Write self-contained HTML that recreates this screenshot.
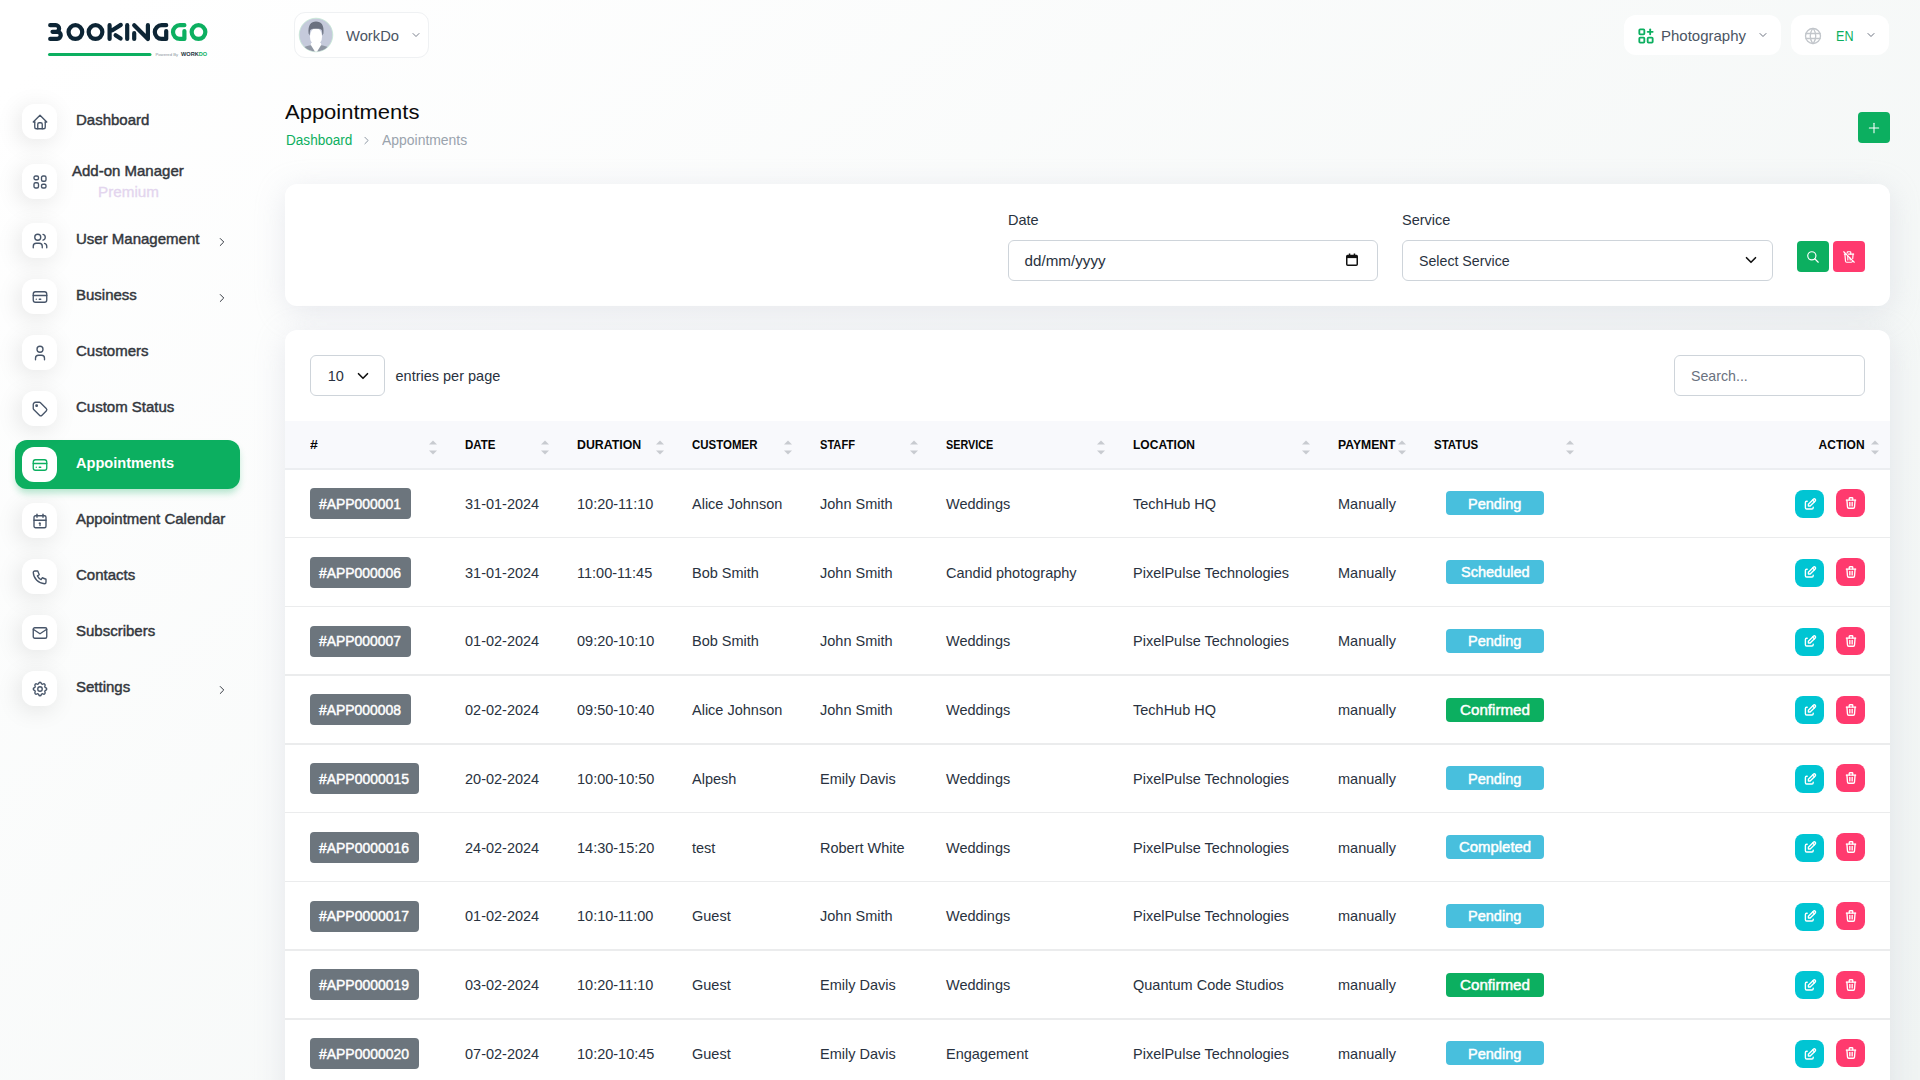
<!DOCTYPE html>
<html><head><meta charset="utf-8"><title>Appointments</title>
<style>
html,body{margin:0;padding:0;width:1920px;height:1080px;overflow:hidden;background:#fff;}
body{position:relative;font-family:"Liberation Sans",sans-serif;}
.a{position:absolute;}
.t{position:absolute;line-height:1;white-space:nowrap;}
svg.a{overflow:visible;}
</style></head><body>
<div class="a" style="left:0;top:0;width:1920px;height:1080px;background:linear-gradient(141.55deg, rgba(240,244,243,0) 3.46%, #f0f4f3 99.86%);"></div>
<svg class="a" style="left:40px;top:15px" width="180" height="50" viewBox="40 15 180 50">
<g fill="none" stroke="#0d2535" stroke-width="4.2" stroke-linecap="round" stroke-linejoin="round">
<path d="M50.2 25.2H55.8a3.3 3.3 0 0 1 0 6.6H52.5M52.5 31.8H57.2a3.55 3.55 0 0 1 0 7.1H50.2"/>
<circle cx="75.4" cy="32.05" r="6.85"/>
<circle cx="95.5" cy="32.05" r="6.85"/>
<path d="M109.6 25.2V38.9M112.3 30.2L120.8 24.9M115.6 35.2L120.6 38.6"/>
<path d="M127.2 25.2V38.9"/>
<path d="M134.2 33.2V38.9M134.2 25.2L147.9 38.9V25.2"/>
<path d="M166.2 25.2H161.65A6.85 6.85 0 0 0 161.65 38.9H166.2V31"/>
</g>
<g fill="none" stroke="#0caf60" stroke-width="4.2" stroke-linecap="round" stroke-linejoin="round">
<path d="M184.4 25.2H179.85A6.85 6.85 0 0 0 179.85 38.9H184.4V31"/>
<circle cx="198.5" cy="32.05" r="6.85"/>
<path d="M49.5 54.5H150" stroke-width="3"/>
</g>
<text x="155.5" y="55.6" font-family="Liberation Sans" font-size="4.2" fill="#8a949c">Powered By</text>
<text x="181" y="56" font-family="Liberation Sans" font-size="5.6" font-weight="700" fill="#1d3340">WORK<tspan fill="#0caf60">DO</tspan></text>
</svg>
<div class="a" style="left:15px;top:440px;width:225px;height:49px;background:#0caf60;border-radius:12px;box-shadow:0 5px 7px -1px rgba(12,175,96,0.3);"></div>
<div class="a" style="left:22px;top:104px;width:35px;height:35px;background:#fff;border-radius:12px;box-shadow:-3px 4px 23px rgba(0,0,0,0.1);"></div>
<svg class="a" style="left:31.1px;top:112.7px;" width="18" height="18" viewBox="0 0 24 24" fill="none" stroke="#475569" stroke-width="1.8" stroke-linecap="round" stroke-linejoin="round"><path d="M5 12l-2 0l9 -9l9 9l-2 0"/><path d="M5 12v7a2 2 0 0 0 2 2h10a2 2 0 0 0 2 -2v-7"/><path d="M9 21v-6a2 2 0 0 1 2 -2h2a2 2 0 0 1 2 2v6"/></svg>
<div class="t" style="left:76px;top:112.30px;font-size:15px;font-weight:400;color:#33373d;-webkit-text-stroke:0.45px #33373d;">Dashboard</div>
<div class="a" style="left:22px;top:164px;width:35px;height:35px;background:#fff;border-radius:12px;box-shadow:-3px 4px 23px rgba(0,0,0,0.1);"></div>
<svg class="a" style="left:31.1px;top:172.7px;" width="18" height="18" viewBox="0 0 24 24" fill="none" stroke="#475569" stroke-width="1.8" stroke-linecap="round" stroke-linejoin="round"><path d="M4 6a2 2 0 0 1 2 -2h2a2 2 0 0 1 2 2v1a2 2 0 0 1 -2 2h-2a2 2 0 0 1 -2 -2z"/><path d="M4 15a2 2 0 0 1 2 -2h2a2 2 0 0 1 2 2v3a2 2 0 0 1 -2 2h-2a2 2 0 0 1 -2 -2z"/><path d="M14 6a2 2 0 0 1 2 -2h2a2 2 0 0 1 2 2v3a2 2 0 0 1 -2 2h-2a2 2 0 0 1 -2 -2z"/><path d="M14 17a2 2 0 0 1 2 -2h2a2 2 0 0 1 2 2v1a2 2 0 0 1 -2 2h-2a2 2 0 0 1 -2 -2z"/></svg>
<div class="t" style="left:72px;top:163.30px;font-size:15px;font-weight:400;color:#33373d;-webkit-text-stroke:0.45px #33373d;">Add-on Manager</div>
<div class="a" style="left:22px;top:223px;width:35px;height:35px;background:#fff;border-radius:12px;box-shadow:-3px 4px 23px rgba(0,0,0,0.1);"></div>
<svg class="a" style="left:31.1px;top:231.7px;" width="18" height="18" viewBox="0 0 24 24" fill="none" stroke="#475569" stroke-width="1.8" stroke-linecap="round" stroke-linejoin="round"><path d="M5 7a4 4 0 1 0 8 0a4 4 0 1 0 -8 0"/><path d="M3 21v-2a4 4 0 0 1 4 -4h4a4 4 0 0 1 4 4v2"/><path d="M16 3.13a4 4 0 0 1 0 7.75"/><path d="M21 21v-2a4 4 0 0 0 -3 -3.85"/></svg>
<div class="t" style="left:76px;top:230.95px;font-size:15px;font-weight:400;color:#33373d;-webkit-text-stroke:0.45px #33373d;">User Management</div>
<svg class="a" style="left:214.5px;top:234.9px;" width="14" height="14" viewBox="0 0 24 24" fill="none" stroke="#333840" stroke-width="1.7" stroke-linecap="round" stroke-linejoin="round"><path d="M9 6l6 6l-6 6"/></svg>
<div class="a" style="left:22px;top:279px;width:35px;height:35px;background:#fff;border-radius:12px;box-shadow:-3px 4px 23px rgba(0,0,0,0.1);"></div>
<svg class="a" style="left:31.1px;top:287.7px;" width="18" height="18" viewBox="0 0 24 24" fill="none" stroke="#475569" stroke-width="1.8" stroke-linecap="round" stroke-linejoin="round"><path d="M3 8a3 3 0 0 1 3 -3h12a3 3 0 0 1 3 3v8a3 3 0 0 1 -3 3h-12a3 3 0 0 1 -3 -3z"/><path d="M3 10l18 0"/><path d="M7 15l.01 0"/><path d="M11 15l2 0"/></svg>
<div class="t" style="left:76px;top:287.20px;font-size:15px;font-weight:400;color:#33373d;-webkit-text-stroke:0.45px #33373d;">Business</div>
<svg class="a" style="left:214.5px;top:291px;" width="14" height="14" viewBox="0 0 24 24" fill="none" stroke="#333840" stroke-width="1.7" stroke-linecap="round" stroke-linejoin="round"><path d="M9 6l6 6l-6 6"/></svg>
<div class="a" style="left:22px;top:335px;width:35px;height:35px;background:#fff;border-radius:12px;box-shadow:-3px 4px 23px rgba(0,0,0,0.1);"></div>
<svg class="a" style="left:31.1px;top:343.7px;" width="18" height="18" viewBox="0 0 24 24" fill="none" stroke="#475569" stroke-width="1.8" stroke-linecap="round" stroke-linejoin="round"><path d="M8 7a4 4 0 1 0 8 0a4 4 0 0 0 -8 0"/><path d="M6 21v-2a4 4 0 0 1 4 -4h4a4 4 0 0 1 4 4v2"/></svg>
<div class="t" style="left:76px;top:343.00px;font-size:15px;font-weight:400;color:#33373d;-webkit-text-stroke:0.45px #33373d;">Customers</div>
<div class="a" style="left:22px;top:391px;width:35px;height:35px;background:#fff;border-radius:12px;box-shadow:-3px 4px 23px rgba(0,0,0,0.1);"></div>
<svg class="a" style="left:31.1px;top:399.7px;" width="18" height="18" viewBox="0 0 24 24" fill="none" stroke="#475569" stroke-width="1.8" stroke-linecap="round" stroke-linejoin="round"><path d="M6.5 7.5a1 1 0 1 0 2 0a1 1 0 1 0 -2 0"/><path d="M3 6v5.172a2 2 0 0 0 .586 1.414l7.71 7.71a2.41 2.41 0 0 0 3.408 0l5.592 -5.592a2.41 2.41 0 0 0 0 -3.408l-7.71 -7.71a2 2 0 0 0 -1.414 -.586h-5.172a3 3 0 0 0 -3 3z"/></svg>
<div class="t" style="left:76px;top:399.20px;font-size:15px;font-weight:400;color:#33373d;-webkit-text-stroke:0.45px #33373d;">Custom Status</div>
<div class="a" style="left:22px;top:447px;width:35px;height:35px;background:#fff;border-radius:12px;"></div>
<svg class="a" style="left:31.1px;top:455.7px;" width="18" height="18" viewBox="0 0 24 24" fill="none" stroke="#0caf60" stroke-width="1.8" stroke-linecap="round" stroke-linejoin="round"><path d="M3 8a3 3 0 0 1 3 -3h12a3 3 0 0 1 3 3v8a3 3 0 0 1 -3 3h-12a3 3 0 0 1 -3 -3z"/><path d="M3 10l18 0"/><path d="M7 15l.01 0"/><path d="M11 15l2 0"/></svg>
<div class="t" style="left:76px;top:456.24px;font-size:14.6px;font-weight:700;color:#fff;">Appointments</div>
<div class="a" style="left:22px;top:503px;width:35px;height:35px;background:#fff;border-radius:12px;box-shadow:-3px 4px 23px rgba(0,0,0,0.1);"></div>
<svg class="a" style="left:31.1px;top:511.7px;" width="18" height="18" viewBox="0 0 24 24" fill="none" stroke="#475569" stroke-width="1.8" stroke-linecap="round" stroke-linejoin="round"><path d="M4 7a2 2 0 0 1 2 -2h12a2 2 0 0 1 2 2v12a2 2 0 0 1 -2 2h-12a2 2 0 0 1 -2 -2v-12z"/><path d="M16 3v4"/><path d="M8 3v4"/><path d="M4 11h16"/><path d="M11 15h1"/><path d="M12 15v3"/></svg>
<div class="t" style="left:76px;top:511.20px;font-size:15px;font-weight:400;color:#33373d;-webkit-text-stroke:0.45px #33373d;">Appointment Calendar</div>
<div class="a" style="left:22px;top:559px;width:35px;height:35px;background:#fff;border-radius:12px;box-shadow:-3px 4px 23px rgba(0,0,0,0.1);"></div>
<svg class="a" style="left:31.1px;top:567.7px;" width="18" height="18" viewBox="0 0 24 24" fill="none" stroke="#475569" stroke-width="1.8" stroke-linecap="round" stroke-linejoin="round"><path d="M5 4h4l2 5l-2.5 1.5a11 11 0 0 0 5 5l1.5 -2.5l5 2v4a2 2 0 0 1 -2 2a16 16 0 0 1 -15 -15a2 2 0 0 1 2 -2"/></svg>
<div class="t" style="left:76px;top:567.00px;font-size:15px;font-weight:400;color:#33373d;-webkit-text-stroke:0.45px #33373d;">Contacts</div>
<div class="a" style="left:22px;top:615px;width:35px;height:35px;background:#fff;border-radius:12px;box-shadow:-3px 4px 23px rgba(0,0,0,0.1);"></div>
<svg class="a" style="left:31.1px;top:623.7px;" width="18" height="18" viewBox="0 0 24 24" fill="none" stroke="#475569" stroke-width="1.8" stroke-linecap="round" stroke-linejoin="round"><path d="M3 7a2 2 0 0 1 2 -2h14a2 2 0 0 1 2 2v10a2 2 0 0 1 -2 2h-14a2 2 0 0 1 -2 -2v-10z"/><path d="M3 7l9 6l9 -6"/></svg>
<div class="t" style="left:76px;top:623.00px;font-size:15px;font-weight:400;color:#33373d;-webkit-text-stroke:0.45px #33373d;">Subscribers</div>
<div class="a" style="left:22px;top:671px;width:35px;height:35px;background:#fff;border-radius:12px;box-shadow:-3px 4px 23px rgba(0,0,0,0.1);"></div>
<svg class="a" style="left:31.1px;top:679.7px;" width="18" height="18" viewBox="0 0 24 24" fill="none" stroke="#475569" stroke-width="1.8" stroke-linecap="round" stroke-linejoin="round"><path d="M10.325 4.317c.426 -1.756 2.924 -1.756 3.35 0a1.724 1.724 0 0 0 2.573 1.066c1.543 -.94 3.31 .826 2.37 2.37a1.724 1.724 0 0 0 1.065 2.572c1.756 .426 1.756 2.924 0 3.35a1.724 1.724 0 0 0 -1.066 2.573c.94 1.543 -.826 3.31 -2.37 2.37a1.724 1.724 0 0 0 -2.572 1.065c-.426 1.756 -2.924 1.756 -3.35 0a1.724 1.724 0 0 0 -2.573 -1.066c-1.543 .94 -3.31 -.826 -2.37 -2.37a1.724 1.724 0 0 0 -1.065 -2.572c-1.756 -.426 -1.756 -2.924 0 -3.35a1.724 1.724 0 0 0 1.066 -2.573c-.94 -1.543 .826 -3.31 2.37 -2.37c1 .608 2.296 .07 2.572 -1.065z"/><path d="M9 12a3 3 0 1 0 6 0a3 3 0 0 0 -6 0"/></svg>
<div class="t" style="left:76px;top:678.70px;font-size:15px;font-weight:400;color:#33373d;-webkit-text-stroke:0.45px #33373d;">Settings</div>
<svg class="a" style="left:214.5px;top:682.5px;" width="14" height="14" viewBox="0 0 24 24" fill="none" stroke="#333840" stroke-width="1.7" stroke-linecap="round" stroke-linejoin="round"><path d="M9 6l6 6l-6 6"/></svg>
<div class="t" style="left:97.5px;top:184.13px;font-size:15.2px;font-weight:400;color:#e3d5ee;-webkit-text-stroke:0.3px #e3d5ee;transform:scaleX(1.0032);transform-origin:0 0;">Premium</div>
<div class="a" style="left:293.5px;top:12px;width:135px;height:46px;background:#fff;border:1px solid #eff1f3;border-radius:11px;box-sizing:border-box;"></div>
<svg class="a" style="left:299px;top:18px" width="34" height="34" viewBox="0 0 34 34">
<defs><clipPath id="avc"><circle cx="17" cy="17" r="16.6"/></clipPath></defs>
<circle cx="17" cy="17" r="16.8" fill="#c5cadb" stroke="#c6ead6" stroke-width="0.8"/>
<g clip-path="url(#avc)">
<path d="M12 25 L22 25 L23 34 L11 34Z" fill="#ffffff"/>
<path d="M1 34 C2 29.5 7 28 12 27.2 L16.2 34Z" fill="#8f96a3"/>
<path d="M33 34 C32 29.5 27 28 22 27.2 L17.8 34Z" fill="#8f96a3"/>
<ellipse cx="17" cy="18.5" rx="6.1" ry="8.6" fill="#ffffff"/>
<path d="M9.6 15.5 C8.8 7 12 3.4 17 3.4 C22.3 3.4 25.3 6.8 24.4 15.5 L23.4 17.5 L23 12.5 C21.5 10.3 19 10.8 17 10.8 C14.5 10.8 12.5 10.5 11 12.5 L10.6 17.5Z" fill="#6b7180"/>
</g></svg>
<div class="t" style="left:345.8px;top:28.10px;font-size:15px;font-weight:400;color:#4b5563;transform:scaleX(0.9833);transform-origin:0 0;">WorkDo</div>
<svg class="a" style="left:410px;top:29.2px;" width="12" height="12" viewBox="0 0 24 24" fill="none" stroke="#6b7280" stroke-width="1.8" stroke-linecap="round" stroke-linejoin="round"><path d="M6 9l6 6l6 -6"/></svg>
<div class="a" style="left:1624px;top:15px;width:157px;height:40px;background:#fff;border-radius:12px;"></div>
<svg class="a" style="left:1635.6px;top:26px;" width="20" height="20" viewBox="0 0 24 24" fill="none" stroke="#0caf60" stroke-width="2.2" stroke-linecap="round" stroke-linejoin="round"><path d="M4 5a1 1 0 0 1 1 -1h4a1 1 0 0 1 1 1v4a1 1 0 0 1 -1 1h-4a1 1 0 0 1 -1 -1z"/><path d="M4 15a1 1 0 0 1 1 -1h4a1 1 0 0 1 1 1v4a1 1 0 0 1 -1 1h-4a1 1 0 0 1 -1 -1z"/><path d="M14 15a1 1 0 0 1 1 -1h4a1 1 0 0 1 1 1v4a1 1 0 0 1 -1 1h-4a1 1 0 0 1 -1 -1z"/><path d="M14 7l6 0"/><path d="M17 4l0 6"/></svg>
<div class="t" style="left:1661px;top:27.90px;font-size:15px;font-weight:400;color:#4b5563;transform:scaleX(0.9992);transform-origin:0 0;">Photography</div>
<svg class="a" style="left:1757px;top:29px;" width="12" height="12" viewBox="0 0 24 24" fill="none" stroke="#6b7280" stroke-width="2" stroke-linecap="round" stroke-linejoin="round"><path d="M6 9l6 6l6 -6"/></svg>
<div class="a" style="left:1791px;top:15px;width:98px;height:40px;background:#fff;border-radius:12px;"></div>
<svg class="a" style="left:1802.5px;top:26px;" width="20" height="20" viewBox="0 0 24 24" fill="none" stroke="#c2c6cb" stroke-width="1.6" stroke-linecap="round" stroke-linejoin="round"><path d="M3 12a9 9 0 1 0 18 0a9 9 0 0 0 -18 0"/><path d="M3.6 9h16.8"/><path d="M3.6 15h16.8"/><path d="M11.5 3a17 17 0 0 0 0 18"/><path d="M12.5 3a17 17 0 0 1 0 18"/></svg>
<div class="t" style="left:1836px;top:28.10px;font-size:15px;font-weight:400;color:#0caf60;transform:scaleX(0.8398);transform-origin:0 0;">EN</div>
<svg class="a" style="left:1865px;top:29px;" width="12" height="12" viewBox="0 0 24 24" fill="none" stroke="#6b7280" stroke-width="2" stroke-linecap="round" stroke-linejoin="round"><path d="M6 9l6 6l6 -6"/></svg>
<div class="t" style="left:285px;top:101.42px;font-size:21px;font-weight:400;color:#0b0b0b;transform:scaleX(1.0466);transform-origin:0 0;">Appointments</div>
<div class="t" style="left:285.5px;top:133.82px;font-size:13.8px;font-weight:400;color:#0caf60;transform:scaleX(0.9835);transform-origin:0 0;">Dashboard</div>
<svg class="a" style="left:360px;top:134px;" width="13" height="13" viewBox="0 0 24 24" fill="none" stroke="#8a94a0" stroke-width="1.8" stroke-linecap="round" stroke-linejoin="round"><path d="M9 6l6 6l-6 6"/></svg>
<div class="t" style="left:382.3px;top:133.82px;font-size:13.8px;font-weight:400;color:#9aa3ad;transform:scaleX(1.0097);transform-origin:0 0;">Appointments</div>
<div class="a" style="left:1858px;top:112px;width:32px;height:31px;background:#0caf60;border-radius:4px;"></div>
<svg class="a" style="left:1866px;top:119.5px;" width="16" height="16" viewBox="0 0 24 24" fill="none" stroke="#fff" stroke-width="1.6" stroke-linecap="round" stroke-linejoin="round"><path d="M12 5l0 14"/><path d="M5 12l14 0"/></svg>
<div class="a" style="left:285px;top:184px;width:1605px;height:122px;background:#fff;border-radius:12px;box-shadow:0 6px 30px rgba(182,186,203,0.3);"></div>
<div class="t" style="left:1008px;top:213.33px;font-size:14.5px;font-weight:400;color:#293240;">Date</div>
<div class="t" style="left:1402px;top:213.33px;font-size:14.5px;font-weight:400;color:#293240;">Service</div>
<div class="a" style="left:1008px;top:240px;width:370px;height:41px;background:#fff;border:1px solid #ced4da;border-radius:6px;box-sizing:border-box;"></div>
<div class="t" style="left:1024.6px;top:253.43px;font-size:15.2px;font-weight:400;color:#293240;">dd/mm/yyyy</div>
<svg class="a" style="left:1346px;top:253px" width="12" height="13" viewBox="0 0 12 13"><rect x="0.75" y="2.5" width="10.5" height="9.75" rx="1" fill="none" stroke="#111" stroke-width="1.5"/><rect x="0.75" y="2.5" width="10.5" height="2.6" fill="#111"/><rect x="2.8" y="0.5" width="1.5" height="2.5" fill="#111"/><rect x="7.7" y="0.5" width="1.5" height="2.5" fill="#111"/></svg>
<div class="a" style="left:1402px;top:240px;width:371px;height:41px;background:#fff;border:1px solid #ced4da;border-radius:6px;box-sizing:border-box;"></div>
<div class="t" style="left:1419px;top:254.28px;font-size:14.2px;font-weight:400;color:#293240;">Select Service</div>
<svg class="a" style="left:1744px;top:254px" width="14" height="12" viewBox="0 0 16 16"><path d="M2 5l6 6 6-6" fill="none" stroke="#111" stroke-width="2.2" stroke-linecap="round" stroke-linejoin="round"/></svg>
<div class="a" style="left:1797px;top:241px;width:32px;height:31px;background:#0caf60;border-radius:4px;"></div>
<svg class="a" style="left:1806px;top:250px;" width="14" height="14" viewBox="0 0 24 24" fill="none" stroke="#fff" stroke-width="2" stroke-linecap="round" stroke-linejoin="round"><path d="M3 10a7 7 0 1 0 14 0a7 7 0 1 0 -14 0"/><path d="M21 21l-6 -6"/></svg>
<div class="a" style="left:1833px;top:241px;width:32px;height:31px;background:#ff3a6e;border-radius:4px;"></div>
<svg class="a" style="left:1842px;top:249.5px;" width="14" height="14" viewBox="0 0 24 24" fill="none" stroke="#fff" stroke-width="2" stroke-linecap="round" stroke-linejoin="round"><path d="M3 3l18 18"/><path d="M4 7h3m4 0h9"/><path d="M10 11l0 6"/><path d="M14 14l0 3"/><path d="M5 7l1 12a2 2 0 0 0 2 2h8a2 2 0 0 0 2 -2l.077 -.923"/><path d="M18.384 14.373l.616 -7.373"/><path d="M9 5v-1a1 1 0 0 1 1 -1h4a1 1 0 0 1 1 1v3"/></svg>
<div class="a" style="left:285px;top:330px;width:1605px;height:800px;background:#fff;border-radius:12px;box-shadow:0 6px 30px rgba(182,186,203,0.3);"></div>
<div class="a" style="left:310px;top:355px;width:75px;height:41px;background:#fff;border:1px solid #ced4da;border-radius:6px;box-sizing:border-box;"></div>
<div class="t" style="left:327.8px;top:369.03px;font-size:14.5px;font-weight:400;color:#293240;">10</div>
<svg class="a" style="left:356px;top:369.5px" width="14" height="12" viewBox="0 0 16 16"><path d="M2 5l6 6 6-6" fill="none" stroke="#111" stroke-width="2.2" stroke-linecap="round" stroke-linejoin="round"/></svg>
<div class="t" style="left:395.5px;top:368.73px;font-size:14.5px;font-weight:400;color:#293240;">entries per page</div>
<div class="a" style="left:1674px;top:355px;width:191px;height:41px;background:#fff;border:1px solid #ced4da;border-radius:6px;box-sizing:border-box;"></div>
<div class="t" style="left:1691px;top:369.28px;font-size:14.2px;font-weight:400;color:#6b7280;">Search...</div>
<div class="a" style="left:285px;top:421px;width:1605px;height:47px;background:#f8f9fc;"></div>
<div class="a" style="left:285px;top:468px;width:1605px;height:1.5px;background:#eceef1;"></div>
<div class="t" style="left:310px;top:437.83px;font-size:13.2px;font-weight:700;color:#060606;transform:scaleX(1.0625);transform-origin:0 0;">#</div>
<svg class="a" style="left:429px;top:439.5px" width="8" height="15" viewBox="0 0 8 15"><path d="M0 4.5L4 0.5L8 4.5Z" fill="#c8cbd0"/><path d="M0 10.5L4 14.5L8 10.5Z" fill="#c8cbd0"/></svg>
<div class="t" style="left:465px;top:437.83px;font-size:13.2px;font-weight:700;color:#060606;transform:scaleX(0.8726);transform-origin:0 0;">DATE</div>
<svg class="a" style="left:541px;top:439.5px" width="8" height="15" viewBox="0 0 8 15"><path d="M0 4.5L4 0.5L8 4.5Z" fill="#c8cbd0"/><path d="M0 10.5L4 14.5L8 10.5Z" fill="#c8cbd0"/></svg>
<div class="t" style="left:577px;top:437.83px;font-size:13.2px;font-weight:700;color:#060606;transform:scaleX(0.9355);transform-origin:0 0;">DURATION</div>
<svg class="a" style="left:656px;top:439.5px" width="8" height="15" viewBox="0 0 8 15"><path d="M0 4.5L4 0.5L8 4.5Z" fill="#c8cbd0"/><path d="M0 10.5L4 14.5L8 10.5Z" fill="#c8cbd0"/></svg>
<div class="t" style="left:692px;top:437.83px;font-size:13.2px;font-weight:700;color:#060606;transform:scaleX(0.8699);transform-origin:0 0;">CUSTOMER</div>
<svg class="a" style="left:784px;top:439.5px" width="8" height="15" viewBox="0 0 8 15"><path d="M0 4.5L4 0.5L8 4.5Z" fill="#c8cbd0"/><path d="M0 10.5L4 14.5L8 10.5Z" fill="#c8cbd0"/></svg>
<div class="t" style="left:820px;top:437.83px;font-size:13.2px;font-weight:700;color:#060606;transform:scaleX(0.8424);transform-origin:0 0;">STAFF</div>
<svg class="a" style="left:909.5px;top:439.5px" width="8" height="15" viewBox="0 0 8 15"><path d="M0 4.5L4 0.5L8 4.5Z" fill="#c8cbd0"/><path d="M0 10.5L4 14.5L8 10.5Z" fill="#c8cbd0"/></svg>
<div class="t" style="left:946px;top:437.83px;font-size:13.2px;font-weight:700;color:#060606;transform:scaleX(0.8196);transform-origin:0 0;">SERVICE</div>
<svg class="a" style="left:1097px;top:439.5px" width="8" height="15" viewBox="0 0 8 15"><path d="M0 4.5L4 0.5L8 4.5Z" fill="#c8cbd0"/><path d="M0 10.5L4 14.5L8 10.5Z" fill="#c8cbd0"/></svg>
<div class="t" style="left:1133px;top:437.83px;font-size:13.2px;font-weight:700;color:#060606;transform:scaleX(0.9125);transform-origin:0 0;">LOCATION</div>
<svg class="a" style="left:1302px;top:439.5px" width="8" height="15" viewBox="0 0 8 15"><path d="M0 4.5L4 0.5L8 4.5Z" fill="#c8cbd0"/><path d="M0 10.5L4 14.5L8 10.5Z" fill="#c8cbd0"/></svg>
<div class="t" style="left:1338px;top:437.83px;font-size:13.2px;font-weight:700;color:#060606;transform:scaleX(0.9239);transform-origin:0 0;">PAYMENT</div>
<svg class="a" style="left:1398px;top:439.5px" width="8" height="15" viewBox="0 0 8 15"><path d="M0 4.5L4 0.5L8 4.5Z" fill="#c8cbd0"/><path d="M0 10.5L4 14.5L8 10.5Z" fill="#c8cbd0"/></svg>
<div class="t" style="left:1434px;top:437.83px;font-size:13.2px;font-weight:700;color:#060606;transform:scaleX(0.8694);transform-origin:0 0;">STATUS</div>
<svg class="a" style="left:1566px;top:439.5px" width="8" height="15" viewBox="0 0 8 15"><path d="M0 4.5L4 0.5L8 4.5Z" fill="#c8cbd0"/><path d="M0 10.5L4 14.5L8 10.5Z" fill="#c8cbd0"/></svg>
<div class="t" style="right:55px;top:437.83px;font-size:13.2px;font-weight:700;color:#060606;transform:scaleX(0.9092);transform-origin:100% 0;">ACTION</div>
<svg class="a" style="left:1871px;top:439.5px" width="8" height="15" viewBox="0 0 8 15"><path d="M0 4.5L4 0.5L8 4.5Z" fill="#c8cbd0"/><path d="M0 10.5L4 14.5L8 10.5Z" fill="#c8cbd0"/></svg>
<div class="a" style="left:285px;top:536.75px;width:1605px;height:1.5px;background:#ebeced;"></div>
<div class="a" style="left:310px;top:488.0px;width:101px;height:31px;background:#6c757d;border-radius:4px;"></div>
<div class="t" style="left:319.3px;top:496.98px;font-size:14.5px;font-weight:400;color:#fff;-webkit-text-stroke:0.45px #fff;transform:scaleX(0.9595);transform-origin:0 0;">#APP000001</div>
<div class="t" style="left:465px;top:496.98px;font-size:14.5px;font-weight:400;color:#293240;">31-01-2024</div>
<div class="t" style="left:577px;top:496.98px;font-size:14.5px;font-weight:400;color:#293240;">10:20-11:10</div>
<div class="t" style="left:692px;top:496.98px;font-size:14.5px;font-weight:400;color:#293240;">Alice Johnson</div>
<div class="t" style="left:820px;top:496.98px;font-size:14.5px;font-weight:400;color:#293240;">John Smith</div>
<div class="t" style="left:946px;top:496.98px;font-size:14.5px;font-weight:400;color:#293240;">Weddings</div>
<div class="t" style="left:1133px;top:496.98px;font-size:14.5px;font-weight:400;color:#293240;">TechHub HQ</div>
<div class="t" style="left:1338px;top:496.98px;font-size:14.5px;font-weight:400;color:#293240;">Manually</div>
<div class="a" style="left:1446px;top:491.4px;width:98px;height:24px;background:#48bfdd;border-radius:4px;"></div>
<div class="t" style="left:1468.30px;top:496.73px;font-size:14.2px;font-weight:400;color:#fff;transform:scaleX(1.0247);transform-origin:0 0;-webkit-text-stroke:0.45px #fff;">Pending</div>
<div class="a" style="left:1795px;top:490.0px;width:29px;height:28px;background:#00c5d3;border-radius:8px;"></div>
<svg class="a" style="left:1803.2px;top:496.7px;" width="14.4" height="14.4" viewBox="0 0 24 24" fill="none" stroke="#fff" stroke-width="2.3" stroke-linecap="round" stroke-linejoin="round"><path d="M7 7h-1a2 2 0 0 0 -2 2v9a2 2 0 0 0 2 2h9a2 2 0 0 0 2 -2v-1"/><path d="M20.385 6.585a2.1 2.1 0 0 0 -2.97 -2.97l-8.415 8.385v3h3l8.385 -8.415z"/><path d="M16 5l3 3"/></svg>
<div class="a" style="left:1836px;top:489.3px;width:29px;height:28px;background:#ff3a6e;border-radius:8px;"></div>
<svg class="a" style="left:1843.5px;top:496.3px;" width="14" height="14" viewBox="0 0 24 24" fill="none" stroke="#fff" stroke-width="2.3" stroke-linecap="round" stroke-linejoin="round"><path d="M4 7l16 0"/><path d="M10 11l0 6"/><path d="M14 11l0 6"/><path d="M5 7l1 12a2 2 0 0 0 2 2h8a2 2 0 0 0 2 -2l1 -12"/><path d="M9 7v-3a1 1 0 0 1 1 -1h4a1 1 0 0 1 1 1v3"/></svg>
<div class="a" style="left:285px;top:605.5px;width:1605px;height:1.5px;background:#ebeced;"></div>
<div class="a" style="left:310px;top:556.75px;width:101px;height:31px;background:#6c757d;border-radius:4px;"></div>
<div class="t" style="left:319.3px;top:565.73px;font-size:14.5px;font-weight:400;color:#fff;-webkit-text-stroke:0.45px #fff;transform:scaleX(0.9595);transform-origin:0 0;">#APP000006</div>
<div class="t" style="left:465px;top:565.73px;font-size:14.5px;font-weight:400;color:#293240;">31-01-2024</div>
<div class="t" style="left:577px;top:565.73px;font-size:14.5px;font-weight:400;color:#293240;">11:00-11:45</div>
<div class="t" style="left:692px;top:565.73px;font-size:14.5px;font-weight:400;color:#293240;">Bob Smith</div>
<div class="t" style="left:820px;top:565.73px;font-size:14.5px;font-weight:400;color:#293240;">John Smith</div>
<div class="t" style="left:946px;top:565.73px;font-size:14.5px;font-weight:400;color:#293240;">Candid photography</div>
<div class="t" style="left:1133px;top:565.73px;font-size:14.5px;font-weight:400;color:#293240;">PixelPulse Technologies</div>
<div class="t" style="left:1338px;top:565.73px;font-size:14.5px;font-weight:400;color:#293240;">Manually</div>
<div class="a" style="left:1446px;top:560.15px;width:98px;height:24px;background:#48bfdd;border-radius:4px;"></div>
<div class="t" style="left:1460.65px;top:565.48px;font-size:14.2px;font-weight:400;color:#fff;transform:scaleX(1.0237);transform-origin:0 0;-webkit-text-stroke:0.45px #fff;">Scheduled</div>
<div class="a" style="left:1795px;top:558.75px;width:29px;height:28px;background:#00c5d3;border-radius:8px;"></div>
<svg class="a" style="left:1803.2px;top:565.45px;" width="14.4" height="14.4" viewBox="0 0 24 24" fill="none" stroke="#fff" stroke-width="2.3" stroke-linecap="round" stroke-linejoin="round"><path d="M7 7h-1a2 2 0 0 0 -2 2v9a2 2 0 0 0 2 2h9a2 2 0 0 0 2 -2v-1"/><path d="M20.385 6.585a2.1 2.1 0 0 0 -2.97 -2.97l-8.415 8.385v3h3l8.385 -8.415z"/><path d="M16 5l3 3"/></svg>
<div class="a" style="left:1836px;top:558.05px;width:29px;height:28px;background:#ff3a6e;border-radius:8px;"></div>
<svg class="a" style="left:1843.5px;top:565.05px;" width="14" height="14" viewBox="0 0 24 24" fill="none" stroke="#fff" stroke-width="2.3" stroke-linecap="round" stroke-linejoin="round"><path d="M4 7l16 0"/><path d="M10 11l0 6"/><path d="M14 11l0 6"/><path d="M5 7l1 12a2 2 0 0 0 2 2h8a2 2 0 0 0 2 -2l1 -12"/><path d="M9 7v-3a1 1 0 0 1 1 -1h4a1 1 0 0 1 1 1v3"/></svg>
<div class="a" style="left:285px;top:674.25px;width:1605px;height:1.5px;background:#ebeced;"></div>
<div class="a" style="left:310px;top:625.5px;width:101px;height:31px;background:#6c757d;border-radius:4px;"></div>
<div class="t" style="left:319.3px;top:634.48px;font-size:14.5px;font-weight:400;color:#fff;-webkit-text-stroke:0.45px #fff;transform:scaleX(0.9595);transform-origin:0 0;">#APP000007</div>
<div class="t" style="left:465px;top:634.48px;font-size:14.5px;font-weight:400;color:#293240;">01-02-2024</div>
<div class="t" style="left:577px;top:634.48px;font-size:14.5px;font-weight:400;color:#293240;">09:20-10:10</div>
<div class="t" style="left:692px;top:634.48px;font-size:14.5px;font-weight:400;color:#293240;">Bob Smith</div>
<div class="t" style="left:820px;top:634.48px;font-size:14.5px;font-weight:400;color:#293240;">John Smith</div>
<div class="t" style="left:946px;top:634.48px;font-size:14.5px;font-weight:400;color:#293240;">Weddings</div>
<div class="t" style="left:1133px;top:634.48px;font-size:14.5px;font-weight:400;color:#293240;">PixelPulse Technologies</div>
<div class="t" style="left:1338px;top:634.48px;font-size:14.5px;font-weight:400;color:#293240;">Manually</div>
<div class="a" style="left:1446px;top:628.9px;width:98px;height:24px;background:#48bfdd;border-radius:4px;"></div>
<div class="t" style="left:1468.30px;top:634.23px;font-size:14.2px;font-weight:400;color:#fff;transform:scaleX(1.0247);transform-origin:0 0;-webkit-text-stroke:0.45px #fff;">Pending</div>
<div class="a" style="left:1795px;top:627.5px;width:29px;height:28px;background:#00c5d3;border-radius:8px;"></div>
<svg class="a" style="left:1803.2px;top:634.2px;" width="14.4" height="14.4" viewBox="0 0 24 24" fill="none" stroke="#fff" stroke-width="2.3" stroke-linecap="round" stroke-linejoin="round"><path d="M7 7h-1a2 2 0 0 0 -2 2v9a2 2 0 0 0 2 2h9a2 2 0 0 0 2 -2v-1"/><path d="M20.385 6.585a2.1 2.1 0 0 0 -2.97 -2.97l-8.415 8.385v3h3l8.385 -8.415z"/><path d="M16 5l3 3"/></svg>
<div class="a" style="left:1836px;top:626.8px;width:29px;height:28px;background:#ff3a6e;border-radius:8px;"></div>
<svg class="a" style="left:1843.5px;top:633.8px;" width="14" height="14" viewBox="0 0 24 24" fill="none" stroke="#fff" stroke-width="2.3" stroke-linecap="round" stroke-linejoin="round"><path d="M4 7l16 0"/><path d="M10 11l0 6"/><path d="M14 11l0 6"/><path d="M5 7l1 12a2 2 0 0 0 2 2h8a2 2 0 0 0 2 -2l1 -12"/><path d="M9 7v-3a1 1 0 0 1 1 -1h4a1 1 0 0 1 1 1v3"/></svg>
<div class="a" style="left:285px;top:743.0px;width:1605px;height:1.5px;background:#ebeced;"></div>
<div class="a" style="left:310px;top:694.25px;width:101px;height:31px;background:#6c757d;border-radius:4px;"></div>
<div class="t" style="left:319.3px;top:703.23px;font-size:14.5px;font-weight:400;color:#fff;-webkit-text-stroke:0.45px #fff;transform:scaleX(0.9595);transform-origin:0 0;">#APP000008</div>
<div class="t" style="left:465px;top:703.23px;font-size:14.5px;font-weight:400;color:#293240;">02-02-2024</div>
<div class="t" style="left:577px;top:703.23px;font-size:14.5px;font-weight:400;color:#293240;">09:50-10:40</div>
<div class="t" style="left:692px;top:703.23px;font-size:14.5px;font-weight:400;color:#293240;">Alice Johnson</div>
<div class="t" style="left:820px;top:703.23px;font-size:14.5px;font-weight:400;color:#293240;">John Smith</div>
<div class="t" style="left:946px;top:703.23px;font-size:14.5px;font-weight:400;color:#293240;">Weddings</div>
<div class="t" style="left:1133px;top:703.23px;font-size:14.5px;font-weight:400;color:#293240;">TechHub HQ</div>
<div class="t" style="left:1338px;top:703.23px;font-size:14.5px;font-weight:400;color:#293240;">manually</div>
<div class="a" style="left:1446px;top:697.65px;width:98px;height:24px;background:#0caf60;border-radius:4px;"></div>
<div class="t" style="left:1460.00px;top:702.98px;font-size:14.2px;font-weight:400;color:#fff;transform:scaleX(1.0687);transform-origin:0 0;-webkit-text-stroke:0.45px #fff;">Confirmed</div>
<div class="a" style="left:1795px;top:696.25px;width:29px;height:28px;background:#00c5d3;border-radius:8px;"></div>
<svg class="a" style="left:1803.2px;top:702.95px;" width="14.4" height="14.4" viewBox="0 0 24 24" fill="none" stroke="#fff" stroke-width="2.3" stroke-linecap="round" stroke-linejoin="round"><path d="M7 7h-1a2 2 0 0 0 -2 2v9a2 2 0 0 0 2 2h9a2 2 0 0 0 2 -2v-1"/><path d="M20.385 6.585a2.1 2.1 0 0 0 -2.97 -2.97l-8.415 8.385v3h3l8.385 -8.415z"/><path d="M16 5l3 3"/></svg>
<div class="a" style="left:1836px;top:695.55px;width:29px;height:28px;background:#ff3a6e;border-radius:8px;"></div>
<svg class="a" style="left:1843.5px;top:702.55px;" width="14" height="14" viewBox="0 0 24 24" fill="none" stroke="#fff" stroke-width="2.3" stroke-linecap="round" stroke-linejoin="round"><path d="M4 7l16 0"/><path d="M10 11l0 6"/><path d="M14 11l0 6"/><path d="M5 7l1 12a2 2 0 0 0 2 2h8a2 2 0 0 0 2 -2l1 -12"/><path d="M9 7v-3a1 1 0 0 1 1 -1h4a1 1 0 0 1 1 1v3"/></svg>
<div class="a" style="left:285px;top:811.75px;width:1605px;height:1.5px;background:#ebeced;"></div>
<div class="a" style="left:310px;top:763.0px;width:109px;height:31px;background:#6c757d;border-radius:4px;"></div>
<div class="t" style="left:319.3px;top:771.98px;font-size:14.5px;font-weight:400;color:#fff;-webkit-text-stroke:0.45px #fff;transform:scaleX(0.9623);transform-origin:0 0;">#APP0000015</div>
<div class="t" style="left:465px;top:771.98px;font-size:14.5px;font-weight:400;color:#293240;">20-02-2024</div>
<div class="t" style="left:577px;top:771.98px;font-size:14.5px;font-weight:400;color:#293240;">10:00-10:50</div>
<div class="t" style="left:692px;top:771.98px;font-size:14.5px;font-weight:400;color:#293240;">Alpesh</div>
<div class="t" style="left:820px;top:771.98px;font-size:14.5px;font-weight:400;color:#293240;">Emily Davis</div>
<div class="t" style="left:946px;top:771.98px;font-size:14.5px;font-weight:400;color:#293240;">Weddings</div>
<div class="t" style="left:1133px;top:771.98px;font-size:14.5px;font-weight:400;color:#293240;">PixelPulse Technologies</div>
<div class="t" style="left:1338px;top:771.98px;font-size:14.5px;font-weight:400;color:#293240;">manually</div>
<div class="a" style="left:1446px;top:766.4px;width:98px;height:24px;background:#48bfdd;border-radius:4px;"></div>
<div class="t" style="left:1468.30px;top:771.73px;font-size:14.2px;font-weight:400;color:#fff;transform:scaleX(1.0247);transform-origin:0 0;-webkit-text-stroke:0.45px #fff;">Pending</div>
<div class="a" style="left:1795px;top:765.0px;width:29px;height:28px;background:#00c5d3;border-radius:8px;"></div>
<svg class="a" style="left:1803.2px;top:771.7px;" width="14.4" height="14.4" viewBox="0 0 24 24" fill="none" stroke="#fff" stroke-width="2.3" stroke-linecap="round" stroke-linejoin="round"><path d="M7 7h-1a2 2 0 0 0 -2 2v9a2 2 0 0 0 2 2h9a2 2 0 0 0 2 -2v-1"/><path d="M20.385 6.585a2.1 2.1 0 0 0 -2.97 -2.97l-8.415 8.385v3h3l8.385 -8.415z"/><path d="M16 5l3 3"/></svg>
<div class="a" style="left:1836px;top:764.3px;width:29px;height:28px;background:#ff3a6e;border-radius:8px;"></div>
<svg class="a" style="left:1843.5px;top:771.3px;" width="14" height="14" viewBox="0 0 24 24" fill="none" stroke="#fff" stroke-width="2.3" stroke-linecap="round" stroke-linejoin="round"><path d="M4 7l16 0"/><path d="M10 11l0 6"/><path d="M14 11l0 6"/><path d="M5 7l1 12a2 2 0 0 0 2 2h8a2 2 0 0 0 2 -2l1 -12"/><path d="M9 7v-3a1 1 0 0 1 1 -1h4a1 1 0 0 1 1 1v3"/></svg>
<div class="a" style="left:285px;top:880.5px;width:1605px;height:1.5px;background:#ebeced;"></div>
<div class="a" style="left:310px;top:831.75px;width:109px;height:31px;background:#6c757d;border-radius:4px;"></div>
<div class="t" style="left:319.3px;top:840.73px;font-size:14.5px;font-weight:400;color:#fff;-webkit-text-stroke:0.45px #fff;transform:scaleX(0.9623);transform-origin:0 0;">#APP0000016</div>
<div class="t" style="left:465px;top:840.73px;font-size:14.5px;font-weight:400;color:#293240;">24-02-2024</div>
<div class="t" style="left:577px;top:840.73px;font-size:14.5px;font-weight:400;color:#293240;">14:30-15:20</div>
<div class="t" style="left:692px;top:840.73px;font-size:14.5px;font-weight:400;color:#293240;">test</div>
<div class="t" style="left:820px;top:840.73px;font-size:14.5px;font-weight:400;color:#293240;">Robert White</div>
<div class="t" style="left:946px;top:840.73px;font-size:14.5px;font-weight:400;color:#293240;">Weddings</div>
<div class="t" style="left:1133px;top:840.73px;font-size:14.5px;font-weight:400;color:#293240;">PixelPulse Technologies</div>
<div class="t" style="left:1338px;top:840.73px;font-size:14.5px;font-weight:400;color:#293240;">manually</div>
<div class="a" style="left:1446px;top:835.15px;width:98px;height:24px;background:#48bfdd;border-radius:4px;"></div>
<div class="t" style="left:1458.90px;top:840.48px;font-size:14.2px;font-weight:400;color:#fff;transform:scaleX(1.0514);transform-origin:0 0;-webkit-text-stroke:0.45px #fff;">Completed</div>
<div class="a" style="left:1795px;top:833.75px;width:29px;height:28px;background:#00c5d3;border-radius:8px;"></div>
<svg class="a" style="left:1803.2px;top:840.45px;" width="14.4" height="14.4" viewBox="0 0 24 24" fill="none" stroke="#fff" stroke-width="2.3" stroke-linecap="round" stroke-linejoin="round"><path d="M7 7h-1a2 2 0 0 0 -2 2v9a2 2 0 0 0 2 2h9a2 2 0 0 0 2 -2v-1"/><path d="M20.385 6.585a2.1 2.1 0 0 0 -2.97 -2.97l-8.415 8.385v3h3l8.385 -8.415z"/><path d="M16 5l3 3"/></svg>
<div class="a" style="left:1836px;top:833.05px;width:29px;height:28px;background:#ff3a6e;border-radius:8px;"></div>
<svg class="a" style="left:1843.5px;top:840.05px;" width="14" height="14" viewBox="0 0 24 24" fill="none" stroke="#fff" stroke-width="2.3" stroke-linecap="round" stroke-linejoin="round"><path d="M4 7l16 0"/><path d="M10 11l0 6"/><path d="M14 11l0 6"/><path d="M5 7l1 12a2 2 0 0 0 2 2h8a2 2 0 0 0 2 -2l1 -12"/><path d="M9 7v-3a1 1 0 0 1 1 -1h4a1 1 0 0 1 1 1v3"/></svg>
<div class="a" style="left:285px;top:949.25px;width:1605px;height:1.5px;background:#ebeced;"></div>
<div class="a" style="left:310px;top:900.5px;width:109px;height:31px;background:#6c757d;border-radius:4px;"></div>
<div class="t" style="left:319.3px;top:909.48px;font-size:14.5px;font-weight:400;color:#fff;-webkit-text-stroke:0.45px #fff;transform:scaleX(0.9623);transform-origin:0 0;">#APP0000017</div>
<div class="t" style="left:465px;top:909.48px;font-size:14.5px;font-weight:400;color:#293240;">01-02-2024</div>
<div class="t" style="left:577px;top:909.48px;font-size:14.5px;font-weight:400;color:#293240;">10:10-11:00</div>
<div class="t" style="left:692px;top:909.48px;font-size:14.5px;font-weight:400;color:#293240;">Guest</div>
<div class="t" style="left:820px;top:909.48px;font-size:14.5px;font-weight:400;color:#293240;">John Smith</div>
<div class="t" style="left:946px;top:909.48px;font-size:14.5px;font-weight:400;color:#293240;">Weddings</div>
<div class="t" style="left:1133px;top:909.48px;font-size:14.5px;font-weight:400;color:#293240;">PixelPulse Technologies</div>
<div class="t" style="left:1338px;top:909.48px;font-size:14.5px;font-weight:400;color:#293240;">manually</div>
<div class="a" style="left:1446px;top:903.9px;width:98px;height:24px;background:#48bfdd;border-radius:4px;"></div>
<div class="t" style="left:1468.30px;top:909.23px;font-size:14.2px;font-weight:400;color:#fff;transform:scaleX(1.0247);transform-origin:0 0;-webkit-text-stroke:0.45px #fff;">Pending</div>
<div class="a" style="left:1795px;top:902.5px;width:29px;height:28px;background:#00c5d3;border-radius:8px;"></div>
<svg class="a" style="left:1803.2px;top:909.2px;" width="14.4" height="14.4" viewBox="0 0 24 24" fill="none" stroke="#fff" stroke-width="2.3" stroke-linecap="round" stroke-linejoin="round"><path d="M7 7h-1a2 2 0 0 0 -2 2v9a2 2 0 0 0 2 2h9a2 2 0 0 0 2 -2v-1"/><path d="M20.385 6.585a2.1 2.1 0 0 0 -2.97 -2.97l-8.415 8.385v3h3l8.385 -8.415z"/><path d="M16 5l3 3"/></svg>
<div class="a" style="left:1836px;top:901.8px;width:29px;height:28px;background:#ff3a6e;border-radius:8px;"></div>
<svg class="a" style="left:1843.5px;top:908.8px;" width="14" height="14" viewBox="0 0 24 24" fill="none" stroke="#fff" stroke-width="2.3" stroke-linecap="round" stroke-linejoin="round"><path d="M4 7l16 0"/><path d="M10 11l0 6"/><path d="M14 11l0 6"/><path d="M5 7l1 12a2 2 0 0 0 2 2h8a2 2 0 0 0 2 -2l1 -12"/><path d="M9 7v-3a1 1 0 0 1 1 -1h4a1 1 0 0 1 1 1v3"/></svg>
<div class="a" style="left:285px;top:1018.0px;width:1605px;height:1.5px;background:#ebeced;"></div>
<div class="a" style="left:310px;top:969.25px;width:109px;height:31px;background:#6c757d;border-radius:4px;"></div>
<div class="t" style="left:319.3px;top:978.23px;font-size:14.5px;font-weight:400;color:#fff;-webkit-text-stroke:0.45px #fff;transform:scaleX(0.9623);transform-origin:0 0;">#APP0000019</div>
<div class="t" style="left:465px;top:978.23px;font-size:14.5px;font-weight:400;color:#293240;">03-02-2024</div>
<div class="t" style="left:577px;top:978.23px;font-size:14.5px;font-weight:400;color:#293240;">10:20-11:10</div>
<div class="t" style="left:692px;top:978.23px;font-size:14.5px;font-weight:400;color:#293240;">Guest</div>
<div class="t" style="left:820px;top:978.23px;font-size:14.5px;font-weight:400;color:#293240;">Emily Davis</div>
<div class="t" style="left:946px;top:978.23px;font-size:14.5px;font-weight:400;color:#293240;">Weddings</div>
<div class="t" style="left:1133px;top:978.23px;font-size:14.5px;font-weight:400;color:#293240;">Quantum Code Studios</div>
<div class="t" style="left:1338px;top:978.23px;font-size:14.5px;font-weight:400;color:#293240;">manually</div>
<div class="a" style="left:1446px;top:972.65px;width:98px;height:24px;background:#0caf60;border-radius:4px;"></div>
<div class="t" style="left:1460.00px;top:977.98px;font-size:14.2px;font-weight:400;color:#fff;transform:scaleX(1.0687);transform-origin:0 0;-webkit-text-stroke:0.45px #fff;">Confirmed</div>
<div class="a" style="left:1795px;top:971.25px;width:29px;height:28px;background:#00c5d3;border-radius:8px;"></div>
<svg class="a" style="left:1803.2px;top:977.95px;" width="14.4" height="14.4" viewBox="0 0 24 24" fill="none" stroke="#fff" stroke-width="2.3" stroke-linecap="round" stroke-linejoin="round"><path d="M7 7h-1a2 2 0 0 0 -2 2v9a2 2 0 0 0 2 2h9a2 2 0 0 0 2 -2v-1"/><path d="M20.385 6.585a2.1 2.1 0 0 0 -2.97 -2.97l-8.415 8.385v3h3l8.385 -8.415z"/><path d="M16 5l3 3"/></svg>
<div class="a" style="left:1836px;top:970.55px;width:29px;height:28px;background:#ff3a6e;border-radius:8px;"></div>
<svg class="a" style="left:1843.5px;top:977.55px;" width="14" height="14" viewBox="0 0 24 24" fill="none" stroke="#fff" stroke-width="2.3" stroke-linecap="round" stroke-linejoin="round"><path d="M4 7l16 0"/><path d="M10 11l0 6"/><path d="M14 11l0 6"/><path d="M5 7l1 12a2 2 0 0 0 2 2h8a2 2 0 0 0 2 -2l1 -12"/><path d="M9 7v-3a1 1 0 0 1 1 -1h4a1 1 0 0 1 1 1v3"/></svg>
<div class="a" style="left:310px;top:1038.0px;width:109px;height:31px;background:#6c757d;border-radius:4px;"></div>
<div class="t" style="left:319.3px;top:1046.98px;font-size:14.5px;font-weight:400;color:#fff;-webkit-text-stroke:0.45px #fff;transform:scaleX(0.9623);transform-origin:0 0;">#APP0000020</div>
<div class="t" style="left:465px;top:1046.98px;font-size:14.5px;font-weight:400;color:#293240;">07-02-2024</div>
<div class="t" style="left:577px;top:1046.98px;font-size:14.5px;font-weight:400;color:#293240;">10:20-10:45</div>
<div class="t" style="left:692px;top:1046.98px;font-size:14.5px;font-weight:400;color:#293240;">Guest</div>
<div class="t" style="left:820px;top:1046.98px;font-size:14.5px;font-weight:400;color:#293240;">Emily Davis</div>
<div class="t" style="left:946px;top:1046.98px;font-size:14.5px;font-weight:400;color:#293240;">Engagement</div>
<div class="t" style="left:1133px;top:1046.98px;font-size:14.5px;font-weight:400;color:#293240;">PixelPulse Technologies</div>
<div class="t" style="left:1338px;top:1046.98px;font-size:14.5px;font-weight:400;color:#293240;">manually</div>
<div class="a" style="left:1446px;top:1041.4px;width:98px;height:24px;background:#48bfdd;border-radius:4px;"></div>
<div class="t" style="left:1468.30px;top:1046.73px;font-size:14.2px;font-weight:400;color:#fff;transform:scaleX(1.0247);transform-origin:0 0;-webkit-text-stroke:0.45px #fff;">Pending</div>
<div class="a" style="left:1795px;top:1040.0px;width:29px;height:28px;background:#00c5d3;border-radius:8px;"></div>
<svg class="a" style="left:1803.2px;top:1046.7px;" width="14.4" height="14.4" viewBox="0 0 24 24" fill="none" stroke="#fff" stroke-width="2.3" stroke-linecap="round" stroke-linejoin="round"><path d="M7 7h-1a2 2 0 0 0 -2 2v9a2 2 0 0 0 2 2h9a2 2 0 0 0 2 -2v-1"/><path d="M20.385 6.585a2.1 2.1 0 0 0 -2.97 -2.97l-8.415 8.385v3h3l8.385 -8.415z"/><path d="M16 5l3 3"/></svg>
<div class="a" style="left:1836px;top:1039.3px;width:29px;height:28px;background:#ff3a6e;border-radius:8px;"></div>
<svg class="a" style="left:1843.5px;top:1046.3px;" width="14" height="14" viewBox="0 0 24 24" fill="none" stroke="#fff" stroke-width="2.3" stroke-linecap="round" stroke-linejoin="round"><path d="M4 7l16 0"/><path d="M10 11l0 6"/><path d="M14 11l0 6"/><path d="M5 7l1 12a2 2 0 0 0 2 2h8a2 2 0 0 0 2 -2l1 -12"/><path d="M9 7v-3a1 1 0 0 1 1 -1h4a1 1 0 0 1 1 1v3"/></svg>
</body></html>
